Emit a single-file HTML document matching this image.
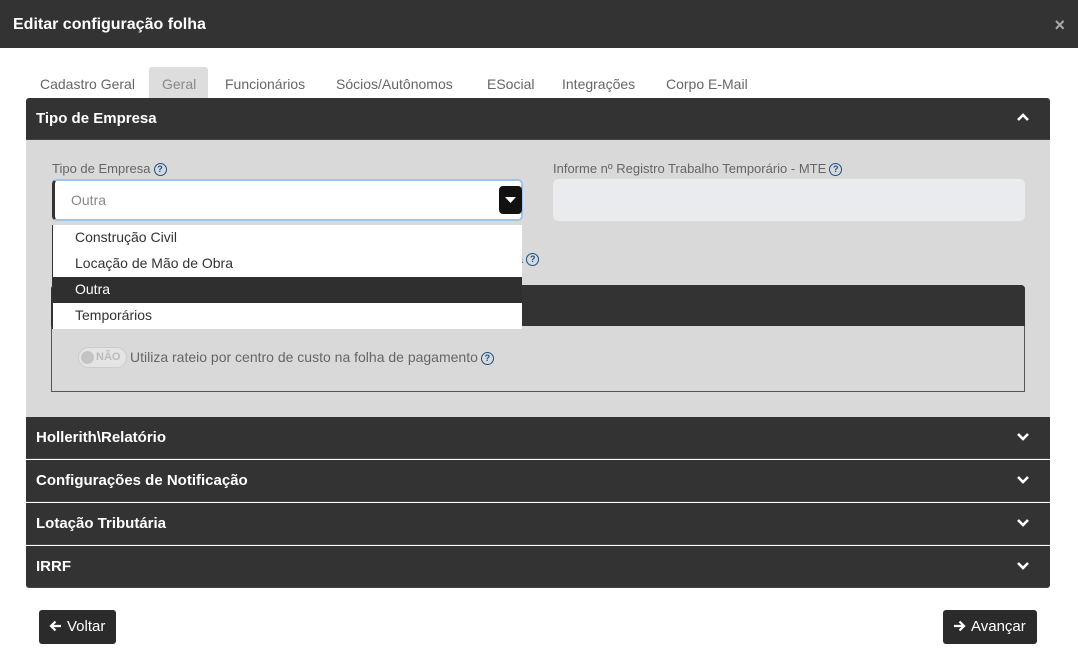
<!DOCTYPE html>
<html><head><meta charset="utf-8"><style>
*{box-sizing:border-box;margin:0;padding:0}
body{width:1078px;height:659px;background:#fff;font-family:"Liberation Sans",Arial,sans-serif;position:relative;overflow:hidden;color:#333}
.a{position:absolute}
.hdr{left:0;top:0;width:1078px;height:48px;background:#333;color:#fff;font-weight:bold;font-size:16px;padding:16px 13px}
.x{right:13px;top:15px;color:#aaa;font-size:18px;font-weight:bold}
.tab{top:76px;font-size:14px;color:#666}
.ph{left:26px;width:1024px;height:42px;background:#333;color:#fff;font-weight:bold;font-size:15px;padding:12px 10px;border-bottom:1px solid #444}
.chev{position:absolute;right:20px;top:14px;width:14px;height:10px}
.q{display:inline-block;width:13px;height:13px;border:1.3px solid #1a4f8a;border-radius:50%;color:#1a4f8a;font-size:9px;font-weight:bold;text-align:center;line-height:11px;vertical-align:middle;margin-left:3px}
.lbl{font-size:13px;color:#666}
.it{left:53px;width:469px;height:26px;font-size:14px;padding:4px 22px;background:#fff;color:#333}
.btn{top:610px;height:34px;background:#2b2b2b;color:#fff;font-size:15px;border-radius:3px;padding:8px 10px;white-space:nowrap}
.btn svg{vertical-align:-1px;margin-right:5px}
</style></head><body>
<div class="a hdr">Editar configuração folha</div>
<div class="a x">×</div>
<div class="a" style="left:149px;top:67px;width:59px;height:31px;background:#ddd;border-radius:3px 3px 0 0"></div>
<div class="a tab" style="left:40px">Cadastro Geral</div>
<div class="a tab" style="left:162px;color:#888">Geral</div>
<div class="a tab" style="left:225px">Funcionários</div>
<div class="a tab" style="left:336px">Sócios/Autônomos</div>
<div class="a tab" style="left:487px">ESocial</div>
<div class="a tab" style="left:562px">Integrações</div>
<div class="a tab" style="left:666px">Corpo E-Mail</div>

<div class="a ph" style="top:98px;border-radius:3px 3px 0 0">Tipo de Empresa<svg class="chev" viewBox="0 0 14 10"><path d="M2 8L7 3L12 8" stroke="#fff" stroke-width="2.6" fill="none"/></svg></div>
<div class="a" style="left:26px;top:140px;width:1024px;height:277px;background:#d9d9d9"></div>
<div class="a lbl" style="left:52px;top:161px">Tipo de Empresa<span class="q">?</span></div>
<div class="a" style="left:52px;top:179px;width:471px;height:42px;background:#fff;border:2px solid #9cc4ec;border-left:3px solid #333;border-radius:5px"></div>
<div class="a" style="left:71px;top:192px;font-size:14px;color:#888">Outra</div>
<div class="a" style="left:499px;top:186px;width:23px;height:28px;background:#111;border-radius:4px"><svg style="position:absolute;left:6px;top:11px" width="11" height="6"><path d="M0 0H11L5.5 6Z" fill="#fff"/></svg></div>
<div class="a lbl" style="left:553px;top:161px">Informe nº Registro Trabalho Temporário - MTE<span class="q">?</span></div>
<div class="a" style="left:553px;top:179px;width:472px;height:42px;background:#e9ebee;border-radius:5px"></div>
<div class="a lbl" style="left:516px;top:251px">a<span class="q">?</span></div>
<div class="a" style="left:51px;top:285px;width:974px;height:107px;border:1px solid #555;border-radius:4px 4px 0 0"></div>
<div class="a" style="left:51px;top:285px;width:974px;height:41px;background:#333;border-radius:4px 4px 0 0"></div>
<div class="a" style="left:78px;top:347px;width:49px;height:21px;border:1px solid #ccc;border-radius:11px;background:#e4e4e4"></div>
<div class="a" style="left:81px;top:351px;width:13px;height:13px;border-radius:50%;background:#c4c4c4"></div>
<div class="a" style="left:96px;top:351px;font-size:11px;color:#bbb;font-weight:bold">NÃO</div>
<div class="a lbl" style="left:130px;top:349px;font-size:14px">Utiliza rateio por centro de custo na folha de pagamento<span class="q">?</span></div>

<div class="a" style="left:52px;top:225px;width:3px;height:104px;background:#333"></div>
<div class="a it" style="top:225px">Construção Civil</div>
<div class="a it" style="top:251px">Locação de Mão de Obra</div>
<div class="a it" style="top:277px;background:#2f2f2f;color:#fff">Outra</div>
<div class="a it" style="top:303px">Temporários</div>

<div class="a ph" style="top:417px">Hollerith\Relatório<svg class="chev" viewBox="0 0 14 10"><path d="M2 3L7 8L12 3" stroke="#fff" stroke-width="2.6" fill="none"/></svg></div>
<div class="a ph" style="top:460px">Configurações de Notificação<svg class="chev" viewBox="0 0 14 10"><path d="M2 3L7 8L12 3" stroke="#fff" stroke-width="2.6" fill="none"/></svg></div>
<div class="a ph" style="top:503px">Lotação Tributária<svg class="chev" viewBox="0 0 14 10"><path d="M2 3L7 8L12 3" stroke="#fff" stroke-width="2.6" fill="none"/></svg></div>
<div class="a ph" style="top:546px;border-radius:0 0 3px 3px">IRRF<svg class="chev" viewBox="0 0 14 10"><path d="M2 3L7 8L12 3" stroke="#fff" stroke-width="2.6" fill="none"/></svg></div>

<div class="a btn" style="left:39px;width:77px"><svg width="13" height="12" viewBox="0 0 13 12"><path d="M12 6H2M6.5 1.5L2 6L6.5 10.5" stroke="#fff" stroke-width="2.2" fill="none"/></svg>Voltar</div>
<div class="a btn" style="left:943px;width:94px"><svg width="13" height="12" viewBox="0 0 13 12"><path d="M1 6H11M6.5 1.5L11 6L6.5 10.5" stroke="#fff" stroke-width="2.2" fill="none"/></svg>Avançar</div>
</body></html>
